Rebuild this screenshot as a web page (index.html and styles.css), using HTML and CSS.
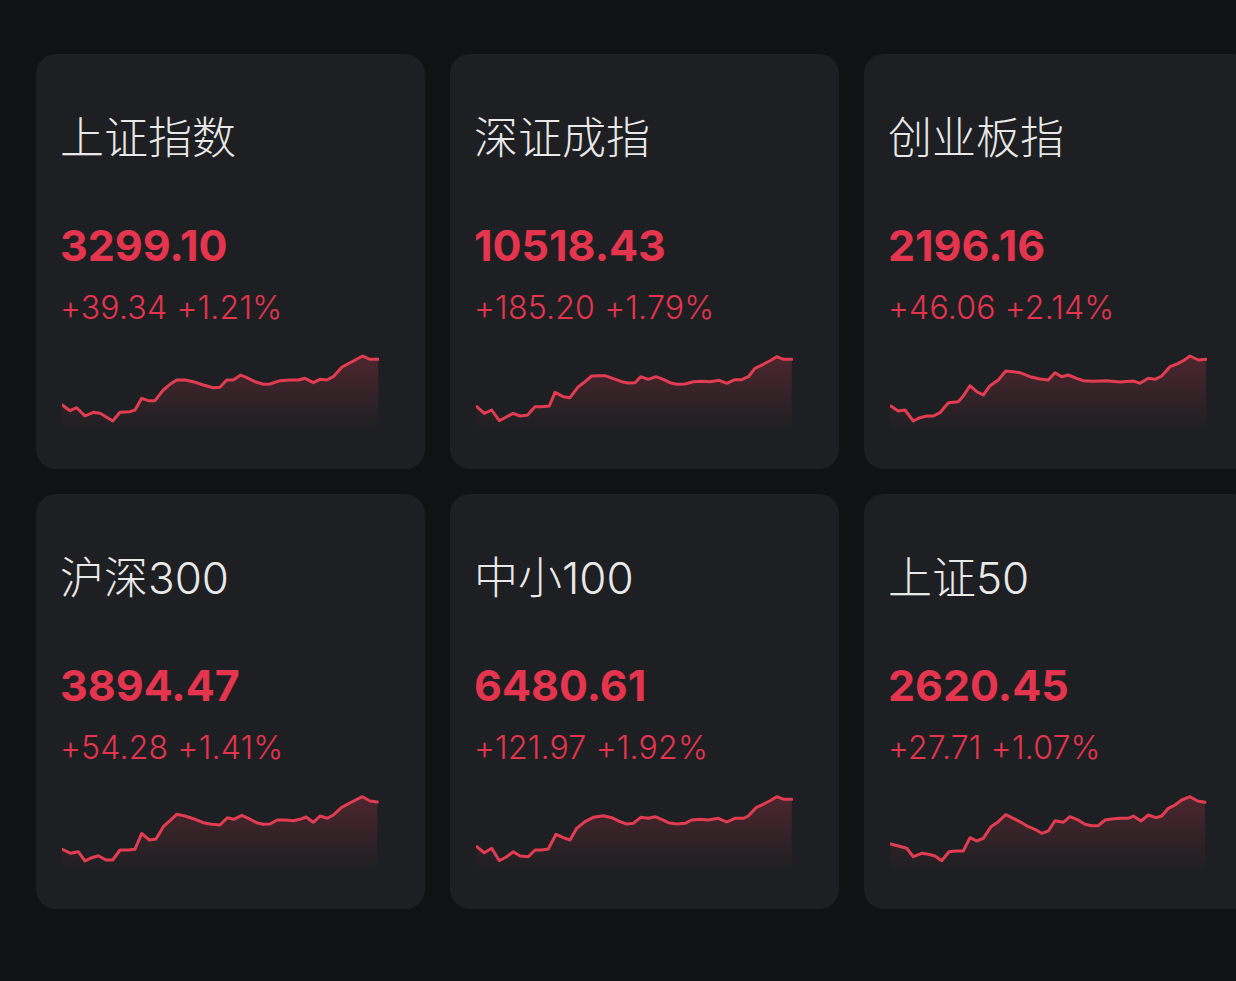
FILE: index.html
```html
<!DOCTYPE html>
<html lang="zh-CN">
<head>
    <meta charset="UTF-8">
    <meta name="viewport" content="width=device-width, initial-scale=1.0">
    <title>指数行情</title>
    <link rel="stylesheet" href="styles.css">
</head>
<body>
    <!-- shared gradient for the chart fills -->
    <svg class="defs" width="0" height="0">
        <defs>
            <linearGradient id="fade" x1="0" y1="5" x2="0" y2="80" gradientUnits="userSpaceOnUse">
                <stop offset="0" stop-color="#e23c52" stop-opacity="0.24"/>
                <stop offset="1" stop-color="#e23c52" stop-opacity="0"/>
            </linearGradient>
        </defs>
    </svg>

    <div class="grid">
        <!-- 上证指数 -->
        <div class="card">
            <div class="title">上证指数</div>
            <div class="price">3299.10</div>
            <div class="change">+39.34 +1.21%</div>
            <svg class="chart" viewBox="0 0 317 85">
                <polygon class="area" points="0.3,55 8,60.7 14.7,57.7 23,66 31.3,62.3 38,63.3 44.7,67.3 50.7,71 58,62.3 68,61.7 73,60 79.7,48.3 86.3,50.7 93,50.7 101.3,40 108,34.3 114.7,30 123,30 131.3,31.7 141.3,35 151.3,37.7 158,37.3 164.7,30 171.3,30 178.7,25 184.7,27.7 193,31.7 201.3,34.3 208,34 218,30.7 228,30 236.3,30 243,28.3 251.3,32.7 258,29.3 264.7,30 271.3,26.7 279.7,17.3 291.3,11 300.7,6 308,9.3 316.3,9.3 316.3,80 0.3,80"/>
                <polyline class="line" points="0.3,55 8,60.7 14.7,57.7 23,66 31.3,62.3 38,63.3 44.7,67.3 50.7,71 58,62.3 68,61.7 73,60 79.7,48.3 86.3,50.7 93,50.7 101.3,40 108,34.3 114.7,30 123,30 131.3,31.7 141.3,35 151.3,37.7 158,37.3 164.7,30 171.3,30 178.7,25 184.7,27.7 193,31.7 201.3,34.3 208,34 218,30.7 228,30 236.3,30 243,28.3 251.3,32.7 258,29.3 264.7,30 271.3,26.7 279.7,17.3 291.3,11 300.7,6 308,9.3 316.3,9.3"/>
            </svg>
        </div>

        <!-- 深证成指 -->
        <div class="card">
            <div class="title">深证成指</div>
            <div class="price">10518.43</div>
            <div class="change">+185.20 +1.79%</div>
            <svg class="chart" viewBox="0 0 317 85">
                <polygon class="area" points="0.7,56.7 8.3,63.3 15.7,60 23.3,70.7 30.7,66.7 37.3,63.3 44,66 51.3,65.3 59,56.7 65.7,56.7 73.3,56 79,42.3 87.3,46.7 94,47.7 102.3,36.7 109,31.7 115.7,26 122.3,25.7 129,25.7 137.3,28.7 145.7,31.7 152.3,33 159,32.7 164.7,26.7 172.3,29.3 180,26.7 187.3,29.3 194,32.7 200.7,34.3 209,34 217.3,31.7 225.7,31.3 234,31.7 243.3,30.3 250.7,33.3 259,29.7 265.7,29.7 272.3,26.7 279,18.3 287.3,14.3 294,10.7 300.7,6.7 307.3,9.3 315.7,9.3 315.7,80 0.7,80"/>
                <polyline class="line" points="0.7,56.7 8.3,63.3 15.7,60 23.3,70.7 30.7,66.7 37.3,63.3 44,66 51.3,65.3 59,56.7 65.7,56.7 73.3,56 79,42.3 87.3,46.7 94,47.7 102.3,36.7 109,31.7 115.7,26 122.3,25.7 129,25.7 137.3,28.7 145.7,31.7 152.3,33 159,32.7 164.7,26.7 172.3,29.3 180,26.7 187.3,29.3 194,32.7 200.7,34.3 209,34 217.3,31.7 225.7,31.3 234,31.7 243.3,30.3 250.7,33.3 259,29.7 265.7,29.7 272.3,26.7 279,18.3 287.3,14.3 294,10.7 300.7,6.7 307.3,9.3 315.7,9.3"/>
            </svg>
        </div>

        <!-- 创业板指 -->
        <div class="card">
            <div class="title">创业板指</div>
            <div class="price">2196.16</div>
            <div class="change">+46.06 +2.14%</div>
            <svg class="chart" viewBox="0 0 317 85">
                <polygon class="area" points="0.7,56 8.3,61 15,60 23.3,71 30,67.7 36.7,66 43.3,66 50,62.7 58.3,52.7 68.3,51.7 73.3,46 80,35.7 86.7,41.7 93.3,45 100,35.7 108.3,30 115.7,21 123.3,21.7 130,22.7 140,26.7 150,29 158.3,30 165,22.7 171.7,26.7 178.3,25 186.7,28.3 193.3,30.7 203.3,31.3 216.7,30.7 230,32 243.3,31 250,33.3 258.3,28.3 265,29.3 271.7,26 280,16.7 288.3,13.3 293.3,10.7 300,6 308.3,10 316,9.3 316,80 0.7,80"/>
                <polyline class="line" points="0.7,56 8.3,61 15,60 23.3,71 30,67.7 36.7,66 43.3,66 50,62.7 58.3,52.7 68.3,51.7 73.3,46 80,35.7 86.7,41.7 93.3,45 100,35.7 108.3,30 115.7,21 123.3,21.7 130,22.7 140,26.7 150,29 158.3,30 165,22.7 171.7,26.7 178.3,25 186.7,28.3 193.3,30.7 203.3,31.3 216.7,30.7 230,32 243.3,31 250,33.3 258.3,28.3 265,29.3 271.7,26 280,16.7 288.3,13.3 293.3,10.7 300,6 308.3,10 316,9.3"/>
            </svg>
        </div>

        <!-- 沪深300 -->
        <div class="card">
            <div class="title">沪深300</div>
            <div class="price">3894.47</div>
            <div class="change">+54.28 +1.41%</div>
            <svg class="chart" viewBox="0 0 317 85">
                <polygon class="area" points="0.3,59.3 8.7,63.3 16.3,61.7 23,71 29.7,67.7 36.3,65.7 44,70 50.7,70 58,60 66.3,60 73,59.3 79.7,43.3 87.3,50 94,49 101.3,36.7 108,30.7 114.7,24.3 123,26 131.3,28.7 141.3,32.7 149.7,34.3 158,35 165.3,27.7 172,29.3 179.7,25.3 186.3,28.3 194.7,32.7 201.3,34.3 208,34 215.3,30 223,30 231.3,30.7 238,29.3 244,27 251.3,32.3 258,26 265.3,28.3 271.3,25 279.7,17.3 289.7,12 300.3,6.7 308,11 315.3,12 315.3,80 0.3,80"/>
                <polyline class="line" points="0.3,59.3 8.7,63.3 16.3,61.7 23,71 29.7,67.7 36.3,65.7 44,70 50.7,70 58,60 66.3,60 73,59.3 79.7,43.3 87.3,50 94,49 101.3,36.7 108,30.7 114.7,24.3 123,26 131.3,28.7 141.3,32.7 149.7,34.3 158,35 165.3,27.7 172,29.3 179.7,25.3 186.3,28.3 194.7,32.7 201.3,34.3 208,34 215.3,30 223,30 231.3,30.7 238,29.3 244,27 251.3,32.3 258,26 265.3,28.3 271.3,25 279.7,17.3 289.7,12 300.3,6.7 308,11 315.3,12"/>
            </svg>
        </div>

        <!-- 中小100 -->
        <div class="card">
            <div class="title">中小100</div>
            <div class="price">6480.61</div>
            <div class="change">+121.97 +1.92%</div>
            <svg class="chart" viewBox="0 0 317 85">
                <polygon class="area" points="0.7,56.7 8.3,62.7 15.7,58.3 23.3,70.7 30.7,66.7 37.3,61.7 44,66 52.3,66.7 59,60 65.7,60 72.3,59 80,44.3 87.3,47.7 94,50 100.7,38.3 109,31.7 117.3,27.3 127.3,25.7 135.7,27.7 144,31.7 150.7,34 157.3,33.3 164.7,27.3 172.3,28.3 179,26.7 185.7,29.3 192.3,32.7 200.7,34 209,33.3 215.7,30 224,29.3 232.3,30 242.3,28.3 250.7,32 259,28.3 267.3,28.3 272.3,26 280,17.7 287.3,14.3 294,10.7 300.7,6.7 308,9.3 315.7,9.3 315.7,80 0.7,80"/>
                <polyline class="line" points="0.7,56.7 8.3,62.7 15.7,58.3 23.3,70.7 30.7,66.7 37.3,61.7 44,66 52.3,66.7 59,60 65.7,60 72.3,59 80,44.3 87.3,47.7 94,50 100.7,38.3 109,31.7 117.3,27.3 127.3,25.7 135.7,27.7 144,31.7 150.7,34 157.3,33.3 164.7,27.3 172.3,28.3 179,26.7 185.7,29.3 192.3,32.7 200.7,34 209,33.3 215.7,30 224,29.3 232.3,30 242.3,28.3 250.7,32 259,28.3 267.3,28.3 272.3,26 280,17.7 287.3,14.3 294,10.7 300.7,6.7 308,9.3 315.7,9.3"/>
            </svg>
        </div>

        <!-- 上证50 -->
        <div class="card">
            <div class="title">上证50</div>
            <div class="price">2620.45</div>
            <div class="change">+27.71 +1.07%</div>
            <svg class="chart" viewBox="0 0 317 85">
                <polygon class="area" points="0.7,54 8.3,56 16.7,58.3 23.3,66.7 31.7,63.3 38.3,64.3 45,66 51.7,70.7 59,61.7 65.7,61 73.3,61 80,47.7 86.7,51 93.3,48.3 101,36.7 108.3,31.7 115.7,24.7 123.3,28.3 131,32.3 138.3,36.7 145,39.3 151.7,43.3 158.3,41 165,30.7 173.3,32.3 180,26.7 186.7,29.3 195,34.3 201.7,35.7 208.3,35.7 215,30 221.7,29 230,28.3 238.3,28.3 243.3,26 251,31 258.3,25 265.7,27.7 271.7,26 278.3,18.3 285,15 291.7,10 300,6.7 307.7,11 315,12.3 315,80 0.7,80"/>
                <polyline class="line" points="0.7,54 8.3,56 16.7,58.3 23.3,66.7 31.7,63.3 38.3,64.3 45,66 51.7,70.7 59,61.7 65.7,61 73.3,61 80,47.7 86.7,51 93.3,48.3 101,36.7 108.3,31.7 115.7,24.7 123.3,28.3 131,32.3 138.3,36.7 145,39.3 151.7,43.3 158.3,41 165,30.7 173.3,32.3 180,26.7 186.7,29.3 195,34.3 201.7,35.7 208.3,35.7 215,30 221.7,29 230,28.3 238.3,28.3 243.3,26 251,31 258.3,25 265.7,27.7 271.7,26 278.3,18.3 285,15 291.7,10 300,6.7 307.7,11 315,12.3"/>
            </svg>
        </div>
    </div>
</body>
</html>
```

FILE: styles.css
```css
/* Global */
html, body {
    margin: 0;
    padding: 0;
    background: #111214;
    font-family: 'Inter', 'Noto Sans CJK SC', sans-serif;
    overflow: hidden;
}

.defs {
    display: block;
    width: 0;
    height: 0;
}

/* Card grid */
.grid {
    display: grid;
    grid-template-columns: repeat(3, 389px);
    grid-auto-rows: 415px;
    gap: 25px;
    padding: 54px 0 0 36px;
}

.card {
    background: #1e1f22;
    border-radius: 20px;
    padding: 0 26px 0 24px;
    display: flex;
    flex-direction: column;
}

.title {
    margin-top: 58px;
    font-size: 44px;
    line-height: 52px;
    font-weight: 300;
    color: #e8e8e8;
}

.price {
    margin-top: 56px;
    font-size: 43px;
    line-height: 50px;
    font-weight: 700;
    color: #e5344e;
}

.change {
    margin-top: 18px;
    font-size: 32px;
    line-height: 40px;
    font-weight: 300;
    letter-spacing: 0.2px;
    color: #e5344e;
}

/* Sparkline */
.chart {
    margin-top: 22px;
    margin-left: 2px;
    width: 317px;
    height: 85px;
}

.chart .line {
    fill: none;
    stroke: #e23c52;
    stroke-width: 3;
    stroke-linejoin: round;
    stroke-linecap: round;
}

.chart .area {
    fill: url(#fade);
}
```
